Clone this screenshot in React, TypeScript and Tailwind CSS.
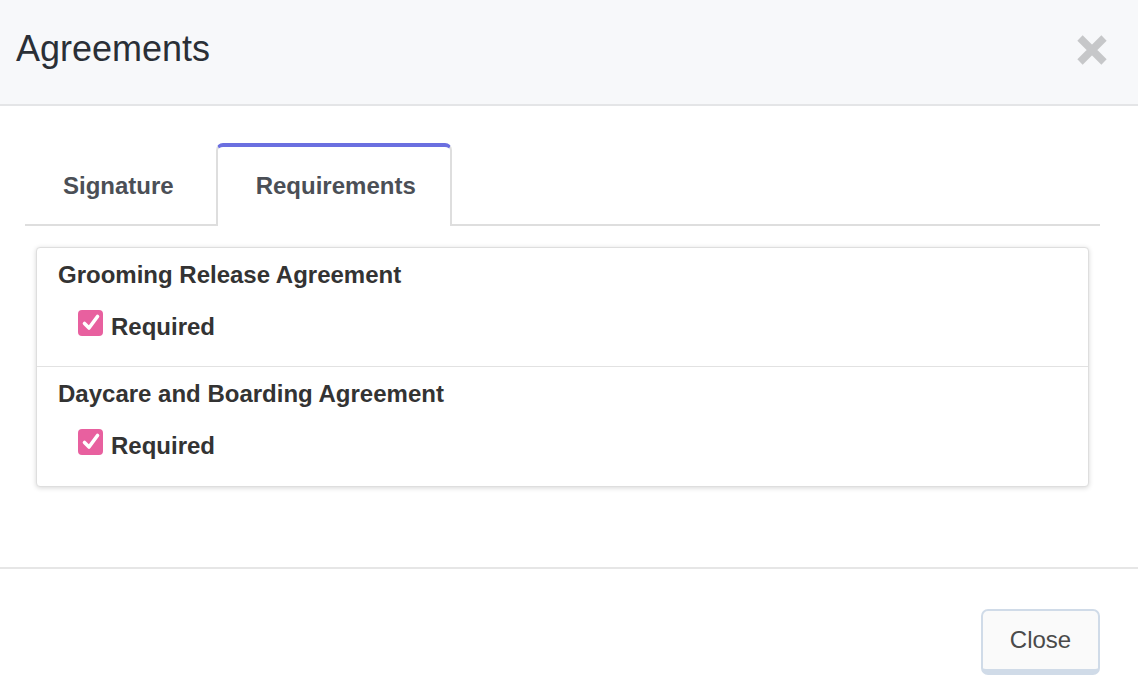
import React from "react";

const rows = ["Grooming Release Agreement", "Daycare and Boarding Agreement"];

const CloseIcon = () => (
  <svg width="32" height="32" viewBox="0 0 32 32" className="block">
    <path d="M4 4 L28 28 M28 4 L4 28" stroke="#c6c7c9" strokeWidth="7.5" strokeLinecap="butt" />
  </svg>
);

const CheckBox = () => (
  <span className="flex h-[26px] w-[25px] shrink-0 items-center justify-center rounded-[4px] bg-[#e8609f]">
    <svg width="20" height="20" viewBox="0 0 20 20">
      <path d="M3.5 10.5 L8 15 L16.5 3.5" fill="none" stroke="white" strokeWidth="3.6" strokeLinecap="round" strokeLinejoin="round" />
    </svg>
  </span>
);

export default function App() {
  return (
    <div className="flex h-[700px] w-full flex-col overflow-hidden bg-white font-['Liberation_Sans',Arial,sans-serif]">
      {/* header */}
      <div className="flex h-[106px] shrink-0 items-start justify-between border-b-2 border-[#e4e5e7] bg-[#f7f8fa] pl-4 pr-[30px] pt-[31px]">
        <h1 className="text-[36px] leading-[36px] text-[#2a2f36]">Agreements</h1>
        <button className="mt-[3px]">
          <CloseIcon />
        </button>
      </div>

      {/* body */}
      <div className="pl-[25px] pr-[38px] pt-[37px]">
        <div className="flex border-b-2 border-[#dedede]">
          <div className="flex h-[81px] items-center border-x-2 border-t-4 border-transparent pl-[36px] pr-[40px] text-[24px] font-bold text-[#4b4f56]">
            Signature
          </div>
          <div className="-mb-[2px] flex h-[83px] items-center rounded-t-[7px] border-x-2 border-t-4 border-x-[#dedede] border-t-[#6b6fe0] bg-white pb-[2px] pl-[38px] pr-[34px] text-[24px] font-bold text-[#4b4f56]">
            Requirements
          </div>
        </div>

        <div className="mx-[11px] mt-[21px] rounded-[4px] border border-[#dedede] bg-white shadow-[0_1px_5px_rgba(0,0,0,0.16)]">
          {rows.map((title, i) => (
            <div
              key={title}
              className={`h-[119px] pl-[21px] pt-[15px] ${i === 0 ? "border-b border-[#e2e2e2]" : ""}`}
            >
              <div className="text-[24px] font-bold leading-[24px] text-[#333333]">{title}</div>
              <div className="ml-[20px] mt-[23px] flex items-start gap-[8px]">
                <CheckBox />
                <span className="mt-[5px] text-[24px] font-bold leading-[24px] text-[#333333]">Required</span>
              </div>
            </div>
          ))}
        </div>
      </div>

      {/* footer */}
      <div className="mt-[80px] border-t-2 border-[#e6e6e6] pr-[38px] pt-[40px]">
        <div className="flex justify-end">
          <button className="h-[66px] w-[119px] rounded-[7px] border-2 border-b-[6px] border-[#d0dbe8] bg-[#fafafa] text-[24px] text-[#4a4a4a]">
            Close
          </button>
        </div>
      </div>
    </div>
  );
}
